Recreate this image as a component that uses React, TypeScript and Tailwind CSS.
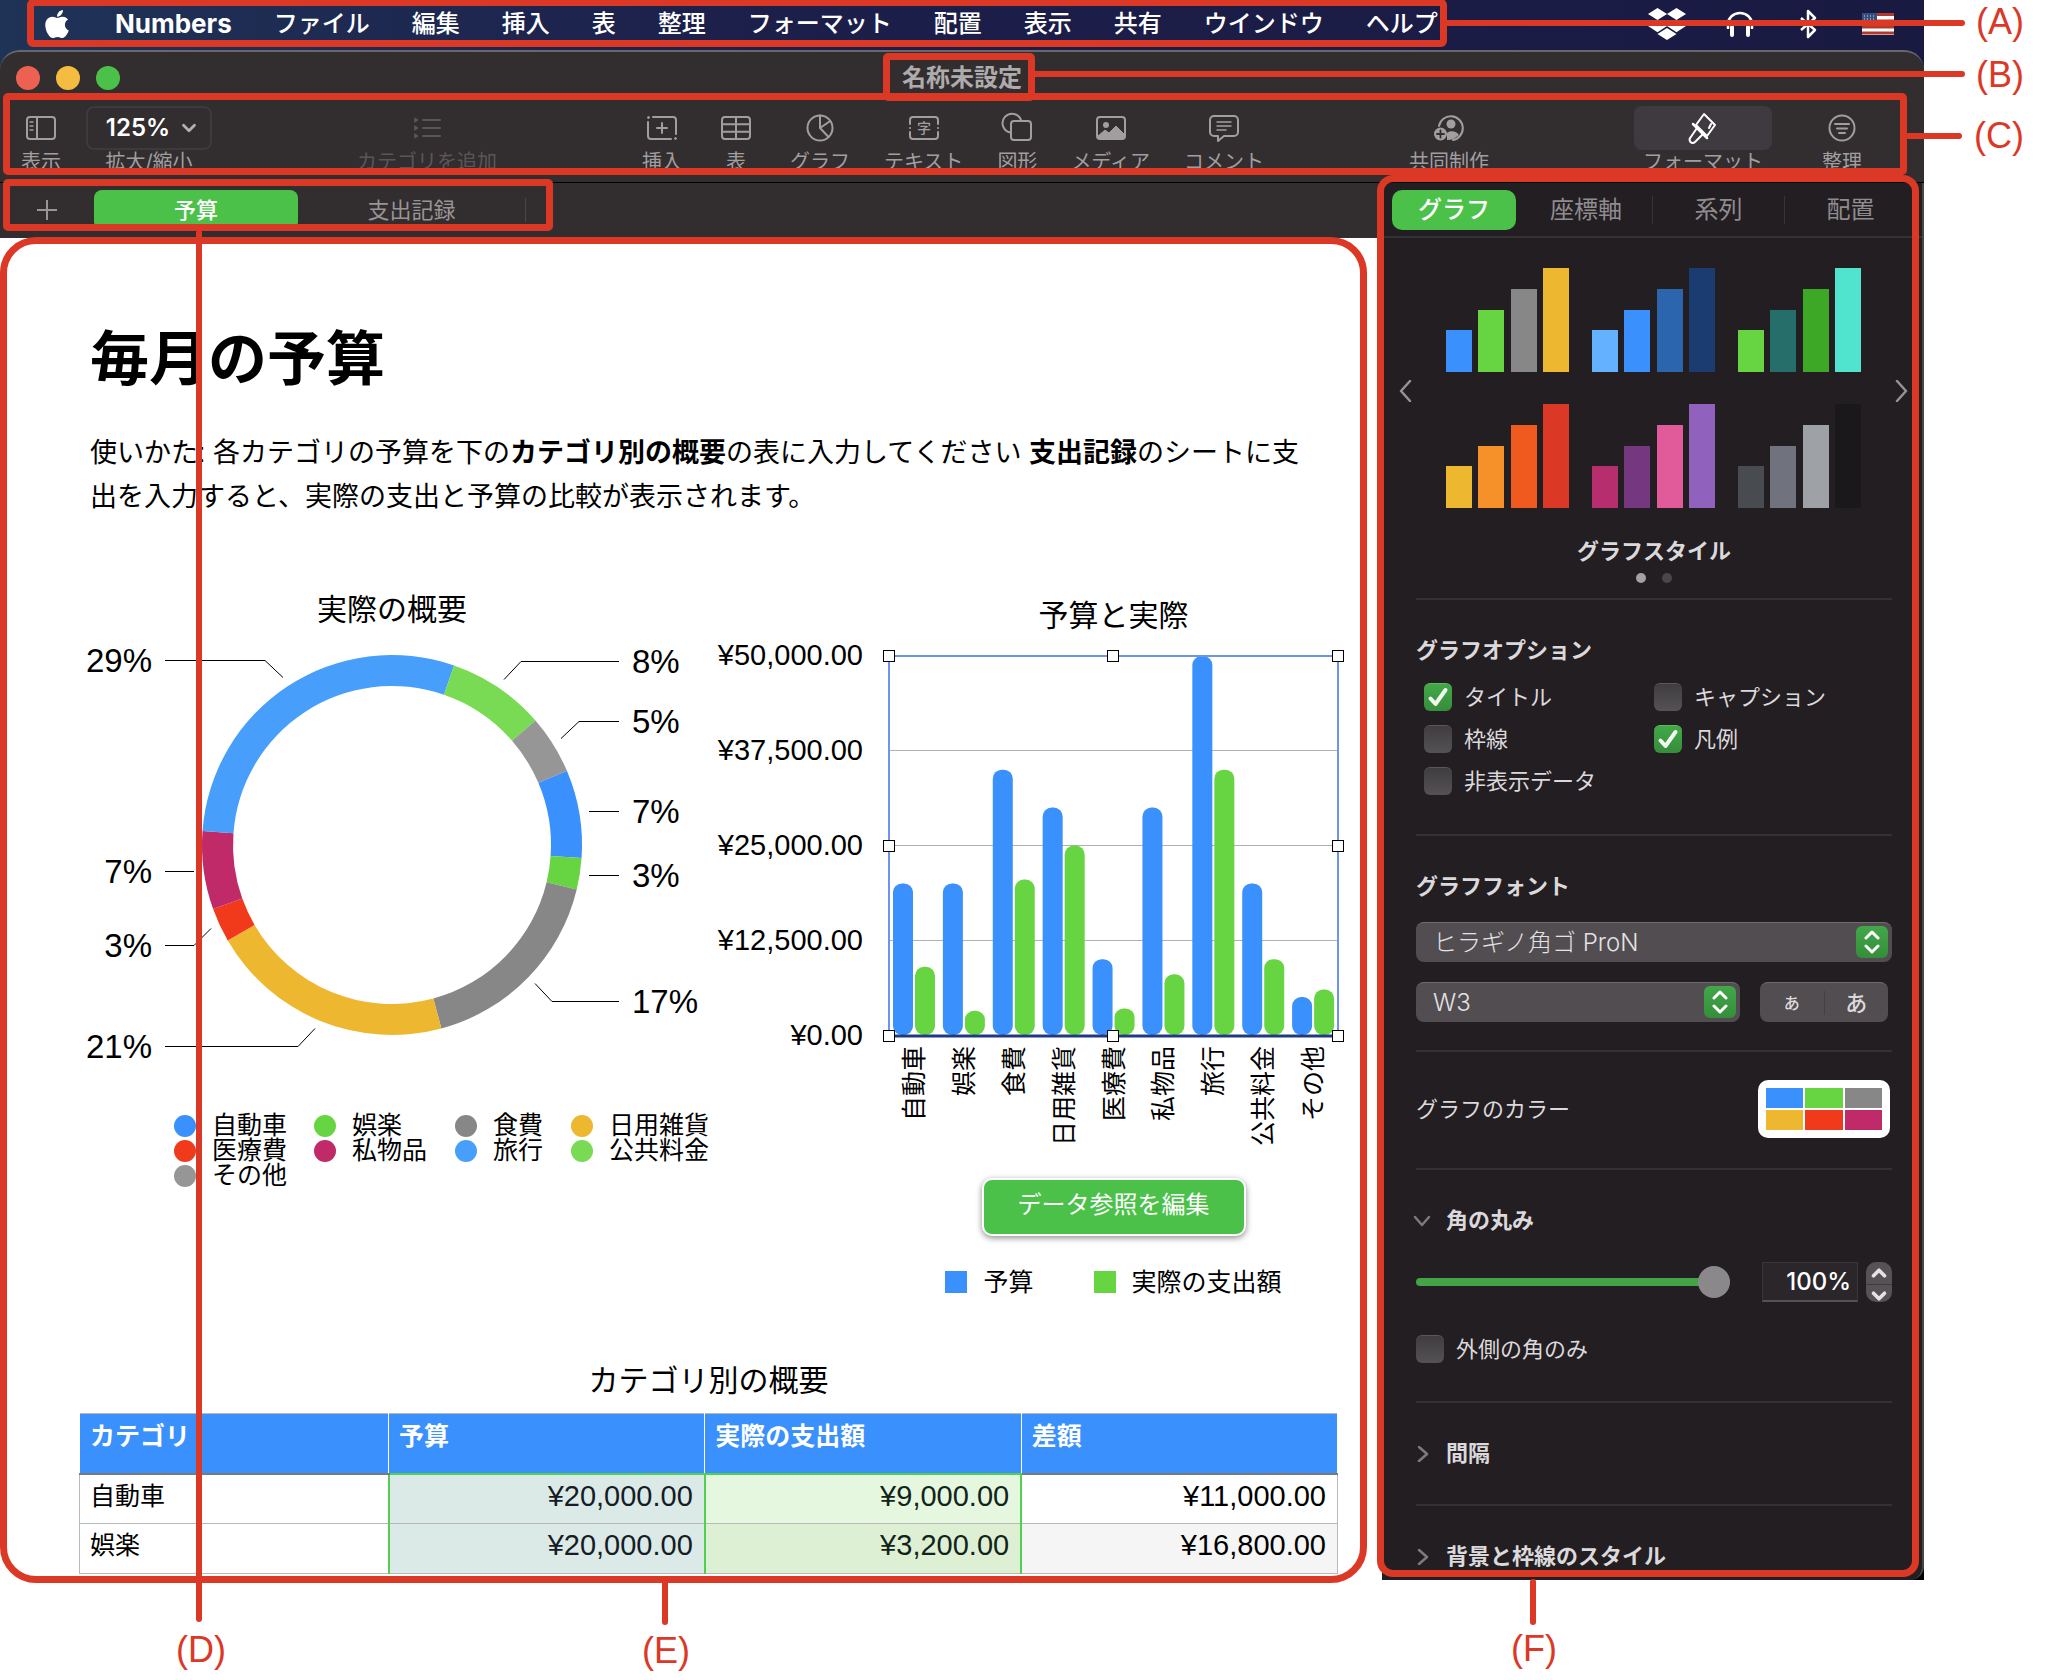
import { Fragment, useState } from 'react'
import type { ReactNode } from 'react'
import { ChevronDown, ChevronUp } from 'lucide-react'
import { FaApple, FaDropbox } from 'react-icons/fa'
import clsx from 'clsx'

const MENUS = ['ファイル', '編集', '挿入', '表', '整理', 'フォーマット', '配置', '表示', '共有', 'ウインドウ', 'ヘルプ']

const CATEGORIES = [
  { name: '自動車', budget: 20000, actual: 9000, color: '#3a90fc' },
  { name: '娯楽', budget: 20000, actual: 3200, color: '#67d542' },
  { name: '食費', budget: 35000, actual: 20500, color: '#878787' },
  { name: '日用雑貨', budget: 30000, actual: 25000, color: '#eeb730' },
  { name: '医療費', budget: 10000, actual: 3500, color: '#f03a1b' },
  { name: '私物品', budget: 30000, actual: 8000, color: '#c12a68' },
  { name: '旅行', budget: 50000, actual: 35000, color: '#489efb' },
  { name: '公共料金', budget: 20000, actual: 10000, color: '#79db53' },
  { name: 'その他', budget: 5000, actual: 6000, color: '#969696' },
]

const SHARE_LABELS = [
  { text: '29%', x: 72, y: 21, anchor: 'end', line: '85,21 185,21 203,38' },
  { text: '7%', x: 72, y: 232, anchor: 'end', line: '85,232 114,232' },
  { text: '3%', x: 72, y: 306, anchor: 'end', line: '85,306 114,306 131,289' },
  { text: '21%', x: 72, y: 407, anchor: 'end', line: '85,407 218,407 235,389' },
  { text: '8%', x: 552, y: 22, anchor: 'start', line: '539,22 441,22 424,40' },
  { text: '5%', x: 552, y: 82, anchor: 'start', line: '539,82 499,82 481,99' },
  { text: '7%', x: 552, y: 172, anchor: 'start', line: '539,172 509,172' },
  { text: '3%', x: 552, y: 236, anchor: 'start', line: '539,236 509,236' },
  { text: '17%', x: 552, y: 362, anchor: 'start', line: '539,362 472,362 455,344' },
] as const

const STYLES = [
  ['bg-[#3a90fc]', 'bg-[#67d542]', 'bg-[#878787]', 'bg-[#eeb730]'],
  ['bg-[#64b2ff]', 'bg-[#3a90fc]', 'bg-[#2b65ad]', 'bg-[#1b3c70]'],
  ['bg-[#67d542]', 'bg-[#266e69]', 'bg-[#3ca826]', 'bg-[#50e3cd]'],
  ['bg-[#eeb730]', 'bg-[#f69028]', 'bg-[#f05a1e]', 'bg-[#dc3826]'],
  ['bg-[#b72e6e]', 'bg-[#743780]', 'bg-[#e15b9b]', 'bg-[#9062be]'],
  ['bg-[#484c51]', 'bg-[#70737e]', 'bg-[#9ea1a5]', 'bg-[#1a181a]'],
]
const STYLE_HEIGHTS = ['h-[42px]', 'h-[62px]', 'h-[83px]', 'h-[104px]']

const PALETTE = ['bg-[#3a90fc]', 'bg-[#67d542]', 'bg-[#878787]', 'bg-[#eeb730]', 'bg-[#f03a1b]', 'bg-[#c12a68]']

/* ---------- callouts ---------- */

function CalloutBox({ className }: { className: string }) {
  return <div className={clsx('pointer-events-none absolute z-10 border-[7px] border-[#dc3826]', className)} />
}

function Leader({ className }: { className: string }) {
  return <div className={clsx('pointer-events-none absolute z-10 rounded-full bg-[#dc3826]', className)} />
}

function CalloutLabel({ className, children }: { className: string; children: ReactNode }) {
  return (
    <span className={clsx("absolute z-10 font-['Liberation_Sans',sans-serif] text-[36px] leading-10 text-[#dc3826]", className)}>
      {children}
    </span>
  )
}

/* ---------- toolbar ---------- */

function ToolIcon({ children }: { children: ReactNode }) {
  return (
    <svg width="32" height="32" viewBox="0 0 32 32" fill="none" stroke="currentColor" strokeWidth="2" strokeLinecap="round" strokeLinejoin="round" aria-hidden="true">
      {children}
    </svg>
  )
}

const ICONS = {
  view: (
    <ToolIcon>
      <rect x="2" y="5" width="28" height="22" rx="3" />
      <path d="M12 5v22" />
      <path d="M5 10h3M5 14h3M5 18h3" strokeWidth="1.5" />
    </ToolIcon>
  ),
  category: (
    <ToolIcon>
      <path d="M12 8h17M12 16h17M12 24h17" />
      <path d="M4 6l3 2-3 2zM4 14l3 2-3 2zM4 22l3 2-3 2z" fill="currentColor" strokeWidth="1" />
    </ToolIcon>
  ),
  insert: (
    <ToolIcon>
      <path d="M7 5h20a3 3 0 0 1 3 3v14M25 27H5a3 3 0 0 1-3-3V10" />
      <path d="M16 11v10M11 16h10" />
      <circle cx="2.5" cy="5.5" r="1" fill="currentColor" strokeWidth="1" />
      <circle cx="29.5" cy="26.5" r="1" fill="currentColor" strokeWidth="1" />
    </ToolIcon>
  ),
  table: (
    <ToolIcon>
      <rect x="2" y="5" width="28" height="22" rx="3" />
      <path d="M16 5v22M2 12.3h28M2 19.7h28" />
    </ToolIcon>
  ),
  chart: (
    <ToolIcon>
      <circle cx="16" cy="16" r="12.5" />
      <path d="M16 3.5V16l8.5 9M16 16l9.5-6.5" />
    </ToolIcon>
  ),
  text: (
    <ToolIcon>
      <path d="M2 12V8a3 3 0 0 1 3-3h22a3 3 0 0 1 3 3v4M2 20v4a3 3 0 0 0 3 3h22a3 3 0 0 0 3-3v-4" />
      <path d="M2 16h.1M30 16h.1" />
      <text x="16" y="21" textAnchor="middle" fontSize="14" fontWeight="500" fontFamily="Noto Sans CJK JP, sans-serif" fill="currentColor" stroke="none">字</text>
    </ToolIcon>
  ),
  shape: (
    <ToolIcon>
      <path d="M9 20.5A9.5 9.5 0 1 1 20 8" />
      <rect x="10" y="9" width="20" height="19" rx="3" />
    </ToolIcon>
  ),
  media: (
    <ToolIcon>
      <rect x="2" y="5" width="28" height="22" rx="3" />
      <circle cx="11" cy="13" r="2" fill="currentColor" />
      <path d="M3 24l7-6 4 3 7-7 8 8v3a2 2 0 0 1-2 2H5a2 2 0 0 1-2-2z" fill="currentColor" strokeWidth="1" />
    </ToolIcon>
  ),
  comment: (
    <ToolIcon>
      <path d="M6 4h20a4 4 0 0 1 4 4v12a4 4 0 0 1-4 4H16l-6 5v-5H6a4 4 0 0 1-4-4V8a4 4 0 0 1 4-4z" />
      <path d="M9 10h14M9 14h14M9 18h9" strokeWidth="1.5" />
    </ToolIcon>
  ),
  collaborate: (
    <ToolIcon>
      <path d="M6 14A12 12 0 1 1 20 28" />
      <circle cx="18" cy="12" r="4.5" fill="currentColor" stroke="none" />
      <path d="M14 28v-7c3-3 10-2 12 2-3 3-7 5-12 5z" fill="currentColor" stroke="none" />
      <circle cx="7.5" cy="22" r="6.5" fill="currentColor" stroke="none" />
      <path d="M7.5 18.5v7M4 22h7" stroke="#322d2f" strokeWidth="1.8" />
    </ToolIcon>
  ),
  format: (
    <ToolIcon>
      <path d="M17 2l11 11-8 11L9 13z" />
      <path d="M6 12l14 14" strokeWidth="2.5" />
      <path d="M10 16L3.500 25.500a3 3 0 0 0 4.500 4.500L16 22M22 16l2-4" />
    </ToolIcon>
  ),
  organize: (
    <ToolIcon>
      <circle cx="16" cy="16" r="12.5" />
      <path d="M9 12h14M11 16.5h10M13 21h6" />
    </ToolIcon>
  ),
}

interface ToolButtonProps {
  icon: keyof typeof ICONS
  label: string
  dim?: boolean
  active?: boolean
}

function ToolButton({ icon, label, dim, active }: ToolButtonProps) {
  return (
    <button type="button" className={clsx('flex min-w-10 flex-col items-center', dim ? 'text-[#5a5658]' : 'text-[#a19ea0]')}>
      <span className={clsx('flex h-11 items-center justify-center rounded-lg', active ? 'w-[138px] bg-[#3e3a3f] text-white' : 'w-10')}>
        {ICONS[icon]}
      </span>
      <span className="text-xl leading-6 whitespace-nowrap">{label}</span>
    </button>
  )
}

function Toolbar() {
  return (
    <div className="relative flex items-start justify-between border-b border-black pt-3 pr-[62px] pb-2 pl-[21px]">
      <div className="flex gap-[25px]">
        <ToolButton icon="view" label="表示" />
        <button type="button" className="flex flex-col items-center text-[#a19ea0]">
          <span className="flex h-11 w-[126px] items-center justify-center gap-2 rounded-lg border-2 border-[#3e393c] pl-2 text-2xl font-semibold text-white">
            125%
            <ChevronDown size={22} strokeWidth={3} className="text-[#b4b1b3]" />
          </span>
          <span className="text-xl leading-6">拡大/縮小</span>
        </button>
      </div>
      <ToolButton icon="category" label="カテゴリを追加" dim />
      <div className="flex gap-[34px]">
        <ToolButton icon="insert" label="挿入" />
        <ToolButton icon="table" label="表" />
        <ToolButton icon="chart" label="グラフ" />
        <ToolButton icon="text" label="テキスト" />
        <ToolButton icon="shape" label="図形" />
        <ToolButton icon="media" label="メディア" />
        <ToolButton icon="comment" label="コメント" />
      </div>
      <ToolButton icon="collaborate" label="共同制作" />
      <div className="flex gap-[50px]">
        <ToolButton icon="format" label="フォーマット" active />
        <ToolButton icon="organize" label="整理" />
      </div>
      <CalloutBox className="-top-px right-[17px] bottom-[7px] left-[3px] rounded-[5px]" />
      <Leader className="top-[39px] -right-[38px] h-[6px] w-[57px]" />
      <CalloutLabel className="top-[22px] left-full ml-[50px]">(C)</CalloutLabel>
    </div>
  )
}

function MenuBar() {
  return (
    <header className="relative flex h-12 items-center justify-between pr-[30px] pl-[27px] text-2xl leading-[30px] text-white">
      <nav className="relative flex h-full items-center gap-[42px] pr-[9px] pl-[14px]">
        <a href="#apple" aria-label="Apple">
          <FaApple size={32} />
        </a>
        <a href="#numbers" className="text-[26px] font-bold">Numbers</a>
        {MENUS.map((menu) => (
          <a key={menu} href={`#${menu}`} className="font-medium whitespace-nowrap">{menu}</a>
        ))}
        <CalloutBox className="inset-x-0 -top-px bottom-px rounded-[6px]" />
      </nav>
      <div className="flex items-center gap-11">
        <FaDropbox size={38} className="-mr-1" />
        <svg width="28" height="26" viewBox="0 0 28 26" fill="none" stroke="currentColor" strokeWidth="2.5" aria-hidden="true">
          <path d="M2 18v-5a12 11 0 0 1 24 0v5" />
          <path d="M6 16v8M22 16v8" strokeWidth="4" strokeLinecap="round" />
        </svg>
        <svg width="20" height="30" viewBox="0 0 20 30" fill="none" stroke="currentColor" strokeWidth="2.5" strokeLinejoin="round" aria-hidden="true">
          <path d="M3 9l14 12-7 7V2l7 7L3 21" />
        </svg>
        <svg width="32" height="22" viewBox="0 0 32 22" aria-hidden="true">
          <path d="M0 0h32v22H0z" fill="#fff" />
          <path d="M0 1.5h32M0 8h32M0 14h32M0 20h32" stroke="#b5382c" strokeWidth="3" />
          <path d="M0 0h15v12H0z" fill="#35507f" />
          <path d="M2 3h12M2 6h12M2 9h12" stroke="#cfd8e8" strokeWidth="1" strokeDasharray="1 2" />
        </svg>
      </div>
      <Leader className="top-[20px] -right-[41px] left-[1444px] h-[6px]" />
      <CalloutLabel className="top-[2px] left-full ml-[52px]">(A)</CalloutLabel>
    </header>
  )
}

/* ---------- charts ---------- */

function point(r: number, deg: number) {
  const rad = (deg * Math.PI) / 180
  return `${(312 + r * Math.sin(rad)).toFixed(2)} ${(205 - r * Math.cos(rad)).toFixed(2)}`
}

function DonutChart() {
  const total = CATEGORIES.reduce((sum, c) => sum + c.actual, 0)
  let angle = 67
  return (
    <svg width="624" height="430" viewBox="0 0 624 430" className="mt-[10px]" role="img" aria-label="実際の概要">
      {CATEGORIES.map(({ name, actual, color }) => {
        const start = angle
        const end = start + (actual / total) * 360
        angle = end
        return (
          <path key={name} fill={color} d={`M${point(190, start)}A190 190 0 0 1 ${point(190, end)}L${point(159, end)}A159 159 0 0 0 ${point(159, start)}Z`} />
        )
      })}
      {SHARE_LABELS.map(({ text, x, y, anchor, line }) => (
        <Fragment key={line}>
          <polyline points={line} fill="none" stroke="#000" strokeWidth="1" transform="translate(0 -0.5)" />
          <text x={x} y={y + 11} textAnchor={anchor} fontSize="33">{text}</text>
        </Fragment>
      ))}
    </svg>
  )
}

function BarChart() {
  const left = 171
  const right = 620
  const top = 11
  const bottom = 391
  const step = (right - left) / CATEGORIES.length
  const height = (value: number) => (value / 50000) * (bottom - top - 1)
  const handles = [left, (left + right) / 2, right].flatMap((x) => [top, (top + bottom) / 2, bottom].map((y) => ({ x, y })))
  return (
    <svg width="620" height="505" viewBox="0 0 620 505" className="mt-[9px] overflow-visible" role="img" aria-label="予算と実際">
      {['¥50,000.00', '¥37,500.00', '¥25,000.00', '¥12,500.00', '¥0.00'].map((tick, i) => (
        <Fragment key={tick}>
          <text x="145" y={top + i * 95 + 9} textAnchor="end" fontSize="29">{tick}</text>
          <path d={`M${left} ${top + i * 95 - 0.5}H${right}`} stroke="#b1b1b1" strokeWidth="1" />
        </Fragment>
      ))}
      {CATEGORIES.map(({ name, budget, actual }, i) => {
        const x = left + i * step
        return (
          <Fragment key={name}>
            <rect x={x + 4} y={bottom - height(budget) - 1} width="20" height={height(budget)} rx="9" fill="#3a90fc" />
            <rect x={x + 26} y={bottom - height(actual) - 1} width="20" height={height(actual)} rx="9" fill="#67d542" />
            <text textAnchor="end" fontSize="25" transform={`translate(${x + 34} 401) rotate(-90)`}>{name}</text>
          </Fragment>
        )
      })}
      <path d={`M${left} ${bottom}V${top}H${right}V${bottom}`} fill="none" stroke="#6f94ee" strokeWidth="2" />
      <path d={`M${left} ${bottom}H${right}`} stroke="#1f3a80" strokeWidth="3" />
      {handles
        .filter(({ x, y }) => !(x === (left + right) / 2 && y === (top + bottom) / 2))
        .map(({ x, y }) => (
          <rect key={`${x}-${y}`} x={Math.floor(x) - 5.5} y={y - 5.5} width="11" height="11" fill="#fff" stroke="#000" />
        ))}
    </svg>
  )
}

/* ---------- sheet ---------- */

function SheetTabs() {
  return (
    <div className="relative flex h-[55px] items-start bg-[#322d2f] pt-[7px] text-[22px] leading-10 text-[#989597]">
      <button type="button" aria-label="シートを追加" className="flex h-10 w-[94px] items-center justify-center">
        <svg width="20" height="20" viewBox="0 0 20 20" stroke="currentColor" strokeWidth="2" aria-hidden="true">
          <path d="M10 0v20M0 10h20" />
        </svg>
      </button>
      <button type="button" className="h-10 w-[204px] rounded-lg bg-[#4bc14a] font-medium text-white">予算</button>
      <button type="button" className="h-10 w-[227px]">支出記録</button>
      <span className="mt-2 h-6 w-px bg-[#4a4648]" />
      <CalloutBox className="-top-1 bottom-[7px] left-[3px] w-[550px] rounded-[5px]" />
    </div>
  )
}

function BudgetTable() {
  return (
    <table className="mt-3 w-full table-fixed border-collapse border border-[#b9b9b9] text-left text-[25px] leading-[42px]">
      <colgroup>
        <col className="w-[309px]" />
        <col />
        <col />
        <col />
      </colgroup>
      <thead>
        <tr className="bg-[#3a90fc] align-top text-white">
          {['カテゴリ', '予算', '実際の支出額', '差額'].map((head, i) => (
            <th
              key={head}
              scope="col"
              className={clsx('h-[60px] border-x border-b-2 border-x-white pl-[10px] leading-[44px] font-bold', i === 1 || i === 2 ? 'border-b-[#50cf50]' : 'border-b-[#7a7a78]')}
            >
              {head}
            </th>
          ))}
        </tr>
      </thead>
      <tbody>
        {CATEGORIES.slice(0, 2).map(({ name, budget, actual }, i) => (
          <tr key={name} className="border-b border-[#b9b9b9] align-top">
            <th scope="row" className="h-[50px] border-l border-[#b9b9b9] pl-[10px] font-normal">{name}</th>
            <Amount value={budget} className="border-x-2 border-x-[#50cf50] bg-[#dbeae7] text-[#151c26]" />
            <Amount value={actual} className={clsx('border-x-2 border-x-[#50cf50] text-[#12241a]', i % 2 ? 'bg-[#ddf0d4]' : 'bg-[#e5f7df]')} />
            <Amount value={budget - actual} className={i % 2 ? 'bg-[#f5f5f5]' : ''} />
          </tr>
        ))}
      </tbody>
    </table>
  )
}

function Amount({ value, className }: { value: number; className: string }) {
  return <td className={clsx('pr-[11px] text-right text-[29px]', className)}>¥{value.toLocaleString('en-US')}.00</td>
}

function Sheet() {
  return (
    <main className="relative flex-1 bg-white pt-[86px] pr-[44px] pb-1 pl-[79px] font-['Liberation_Sans','Noto_Sans_CJK_JP',sans-serif] text-black">
      <h1 className="pl-[11px] text-[59px] leading-[72px] font-bold">毎月の予算</h1>
      <p className="mt-[35px] pl-[11px] text-[27px] leading-[44px]">
        使いかた: 各カテゴリの予算を下の<b>カテゴリ別の概要</b>の表に入力してください <b>支出記録</b>のシートに支
        <br />
        出を入力すると、実際の支出と予算の比較が表示されます。
      </p>

      <div className="mt-[71px] flex justify-between pl-px">
        <section className="w-[624px]">
          <h2 className="text-center text-[30px] leading-10">実際の概要</h2>
          <DonutChart />
          <ul className="mt-[43px] ml-[94px] grid grid-cols-[140px_141px_116px_auto] text-[25px] leading-[25px] whitespace-nowrap">
            {CATEGORIES.map(({ name, color }) => (
              <li key={name} className="flex items-center gap-4">
                <span className="size-[22px] rounded-full" style={{ background: color }} />
                {name}
              </li>
            ))}
          </ul>
        </section>

        <section className="w-[620px] pt-[6px]">
          <h2 className="pl-[171px] text-center text-[30px] leading-10">予算と実際</h2>
          <BarChart />
          <div className="flex flex-col items-center pt-7 pl-[171px]">
            <button type="button" className="h-[58px] w-[264px] rounded-[10px] border-2 border-white bg-[#4bc14a] pb-1 text-2xl text-white shadow-[0_2px_6px_rgba(0,0,0,0.45)]">
              データ参照を編集
            </button>
            <ul className="mt-[30px] flex gap-[60px] text-[25px] leading-8">
              <li className="flex items-center gap-4">
                <span className="size-[22px] bg-[#3a90fc]" />
                予算
              </li>
              <li className="flex items-center gap-4">
                <span className="size-[22px] bg-[#67d542]" />
                実際の支出額
              </li>
            </ul>
          </div>
        </section>
      </div>

      <h2 className="mt-[63px] text-center text-[30px] leading-10">カテゴリ別の概要</h2>
      <BudgetTable />

      <CalloutBox className="-top-px right-[15px] -bottom-[3px] left-0 rounded-[36px]" />
      <Leader className="-top-[8px] -bottom-[42px] left-[196px] w-[6px]" />
      <CalloutLabel className="top-full left-[176px] mt-[50px]">(D)</CalloutLabel>
      <Leader className="-bottom-[45px] left-[662px] h-[46px] w-[6px]" />
      <CalloutLabel className="top-full left-[642px] mt-[51px]">(E)</CalloutLabel>
    </main>
  )
}

/* ---------- inspector ---------- */

function Divider() {
  return <hr className="h-[2px] border-0 bg-[#343135]" />
}

function CheckField({ label, defaultChecked = false }: { label: string; defaultChecked?: boolean }) {
  const [checked, setChecked] = useState(defaultChecked)
  return (
    <label className="flex h-7 items-center gap-3">
      <span className="relative flex size-7">
        <input
          type="checkbox"
          checked={checked}
          onChange={(e) => setChecked(e.target.checked)}
          className="size-7 appearance-none rounded-md border-t border-[#5a575a] bg-linear-to-b from-[#403d40] to-[#555256] checked:border-[#5cb860] checked:from-[#42a848] checked:to-[#368d3b]"
        />
        {checked && (
          <svg width="28" height="28" viewBox="0 0 28 28" fill="none" stroke="#f0f7ee" strokeWidth="4" strokeLinecap="round" strokeLinejoin="round" className="pointer-events-none absolute inset-0" aria-hidden="true">
            <path d="M6.5 15.5l5 5.500L21.500 7" />
          </svg>
        )}
      </span>
      {label}
    </label>
  )
}

function SelectField({ label, value, className }: { label: string; value: string; className: string }) {
  return (
    <div className={clsx('relative h-10', className)}>
      <select aria-label={label} className="h-10 w-full appearance-none rounded-lg border-t border-[#6f6b6f] bg-[#524d51] pl-[17px] text-2xl font-light text-[#e4e2e4]">
        <option>{value}</option>
      </select>
      <span className="pointer-events-none absolute top-1 right-1 flex size-8 items-center justify-center rounded-md bg-linear-to-b from-[#42a848] to-[#368d3b] text-white">
        <svg width="16" height="24" viewBox="0 0 16 24" fill="none" stroke="currentColor" strokeWidth="3" strokeLinecap="round" strokeLinejoin="round" aria-hidden="true">
          <path d="M2 8l6-6 6 6M2 16l6 6 6-6" />
        </svg>
      </span>
    </div>
  )
}

function SectionTitle({ children, open }: { children: ReactNode; open?: boolean }) {
  return (
    <button type="button" className="mt-9 mb-px flex h-7 items-center font-bold">
      <span className="-ml-1 flex w-[34px] justify-center pr-[14px] text-[#7d7a7d]">
        <svg width="18" height="18" viewBox="0 0 18 18" fill="none" stroke="currentColor" strokeWidth="2.5" strokeLinecap="round" strokeLinejoin="round" aria-hidden="true">
          {open ? <path d="M2 6l7 8 7-8" /> : <path d="M6 3l8 7-8 7" />}
        </svg>
      </span>
      {children}
    </button>
  )
}

function Arrow({ label, path }: { label: string; path: string }) {
  return (
    <button type="button" aria-label={label} className="pt-[6px] text-[#969396]">
      <svg width="13" height="22" viewBox="0 0 13 22" fill="none" stroke="currentColor" strokeWidth="2.5" strokeLinecap="round" strokeLinejoin="round">
        <path d={path} />
      </svg>
    </button>
  )
}

function Inspector() {
  return (
    <aside className="relative w-[542px] shrink-0 rounded-br-[14px] border-r-2 border-[#49464a] bg-[#231e22] text-[22px] leading-7 text-[#dbd9db]">
      <div className="grid h-[55px] grid-cols-4 items-start border-b-2 border-[#343135] pt-[7px] pr-[6px] pl-[6px] text-2xl leading-10 text-[#8f8c8f]">
        <button type="button" className="mx-1 h-10 rounded-[10px] bg-[#4bc14a] font-medium text-white">グラフ</button>
        <button type="button" className="h-10">座標軸</button>
        <button type="button" className="flex h-10 items-center justify-center before:h-7 before:w-px before:bg-[#383438] before:content-['']">
          <span className="flex-1">系列</span>
        </button>
        <button type="button" className="flex h-10 items-center justify-center before:h-7 before:w-px before:bg-[#383438] before:content-['']">
          <span className="flex-1">配置</span>
        </button>
      </div>

      <div className="flex items-center justify-between pt-[30px] pr-[14px] pl-[17px]">
        <Arrow label="前へ" path="M11 1L2 11l9 10" />
        <div className="grid grid-cols-3 gap-x-[22px] gap-y-8">
          {STYLES.map((bars) => (
            <button key={bars.join()} type="button" aria-label="グラフスタイル" className="flex h-[104px] w-[124px] items-end justify-between">
              {bars.map((bar, i) => (
                <span key={bar} className={clsx('w-[26px]', bar, STYLE_HEIGHTS[i])} />
              ))}
            </button>
          ))}
        </div>
        <Arrow label="次へ" path="M2 1l9 10-9 10" />
      </div>

      <div className="pr-[30px] pb-[9px] pl-[34px]">
        <h2 className="mt-[29px] text-center font-bold">グラフスタイル</h2>
        <div className="mt-2 mb-[15px] flex justify-center gap-4">
          <span className="size-[10px] rounded-full bg-[#a3a1a3]" />
          <span className="size-[10px] rounded-full bg-[#4a474a]" />
        </div>
        <Divider />

        <h2 className="mt-9 font-bold">グラフオプション</h2>
        <div className="mt-[19px] mb-[39px] ml-2 grid grid-cols-[230px_auto] gap-y-[14px]">
          <CheckField label="タイトル" defaultChecked />
          <CheckField label="キャプション" />
          <CheckField label="枠線" />
          <CheckField label="凡例" defaultChecked />
          <CheckField label="非表示データ" />
        </div>
        <Divider />

        <h2 className="mt-9 font-bold">グラフフォント</h2>
        <SelectField label="グラフフォント" value="ヒラギノ角ゴ ProN" className="mt-[22px]" />
        <div className="mt-5 mb-7 flex gap-5 pr-1">
          <SelectField label="ウェイト" value="W3" className="flex-1" />
          <div className="flex h-10 w-32 items-center rounded-lg border-t border-[#6f6b6f] bg-[#524d51] font-medium">
            <button type="button" className="flex-1 text-base">あ</button>
            <span className="h-6 w-px bg-[#444044]" />
            <button type="button" className="flex-1">あ</button>
          </div>
        </div>
        <Divider />

        <div className="mt-7 mb-[30px] flex items-center justify-between pr-[2px]">
          <span>グラフのカラー</span>
          <button type="button" aria-label="グラフのカラー" className="grid h-[58px] w-[132px] grid-cols-3 grid-rows-2 gap-[2px] rounded-[10px] bg-white p-2">
            {PALETTE.map((color) => (
              <span key={color} className={color} />
            ))}
          </button>
        </div>
        <Divider />

        <SectionTitle open>角の丸み</SectionTitle>
        <div className="mt-7 flex h-10 items-center">
          <input
            type="range"
            aria-label="角の丸み"
            defaultValue={100}
            className="h-2 min-w-0 flex-1 appearance-none rounded-full bg-[#43a347] [&::-webkit-slider-thumb]:size-8 [&::-webkit-slider-thumb]:appearance-none [&::-webkit-slider-thumb]:rounded-full [&::-webkit-slider-thumb]:bg-[#8b888b]"
          />
          <input
            type="text"
            aria-label="角の丸み (%)"
            defaultValue="100%"
            className="ml-8 h-10 w-24 border border-b-2 border-[#3a373b] border-b-[#555256] bg-[#2a262a] pr-[6px] text-right text-2xl font-medium text-white"
          />
          <div className="ml-2 flex h-10 w-[26px] flex-col overflow-hidden rounded-[10px] bg-[#565256] text-[#e4e2e4]">
            <button type="button" aria-label="増やす" className="flex flex-1 items-center justify-center border-b border-[#3f3b3f]">
              <ChevronUp size={22} strokeWidth={4} />
            </button>
            <button type="button" aria-label="減らす" className="flex flex-1 items-center justify-center">
              <ChevronDown size={22} strokeWidth={4} />
            </button>
          </div>
        </div>
        <div className="mt-[33px] mb-[38px]">
          <CheckField label="外側の角のみ" />
        </div>
        <Divider />

        <SectionTitle>間隔</SectionTitle>
        <div className="h-9" />
        <Divider />
        <SectionTitle>背景と枠線のスタイル</SectionTitle>
      </div>

      <CalloutBox className="-top-2 right-[3px] bottom-[3px] -left-[5px] rounded-[16px]" />
      <Leader className="-bottom-[45px] left-[148px] h-[46px] w-[6px]" />
      <CalloutLabel className="top-full left-[129px] mt-[49px]">(F)</CalloutLabel>
    </aside>
  )
}

export default function App() {
  return (
    <div className="bg-white pr-[136px] pb-[100px] font-['Inter','Noto_Sans_CJK_JP',sans-serif]">
      <div className="bg-linear-to-r from-[#1f3357] via-[#1c1f4a] via-40% to-[#191a42]">
        <MenuBar />
        <div className="mt-0.5 rounded-t-[20px] border-t-2 border-[#69676a] bg-[#322d2f]">
          <div className="relative flex h-[42px] items-center justify-center pt-[10px]">
            <div className="absolute left-4 flex gap-4">
              <button type="button" aria-label="閉じる" className="size-6 rounded-full bg-[#ed6152]" />
              <button type="button" aria-label="しまう" className="size-6 rounded-full bg-[#f4bd41]" />
              <button type="button" aria-label="拡大" className="size-6 rounded-full bg-[#4bc14a]" />
            </div>
            <div className="relative text-2xl leading-8 font-bold text-[#aeabad]">
              名称未設定
              <CalloutBox className="-top-[9px] -right-[13px] -bottom-[7px] -left-[19px] rounded-[5px]" />
            </div>
            <Leader className="top-[19px] -right-[41px] left-1/2 ml-[70px] h-[6px]" />
            <CalloutLabel className="top-[3px] left-full ml-[52px]">(B)</CalloutLabel>
          </div>
          <Toolbar />
          <div className="flex items-stretch bg-black">
            <div className="flex min-w-0 flex-1 flex-col bg-white">
              <SheetTabs />
              <Sheet />
            </div>
            <Inspector />
          </div>
        </div>
      </div>
    </div>
  )
}
